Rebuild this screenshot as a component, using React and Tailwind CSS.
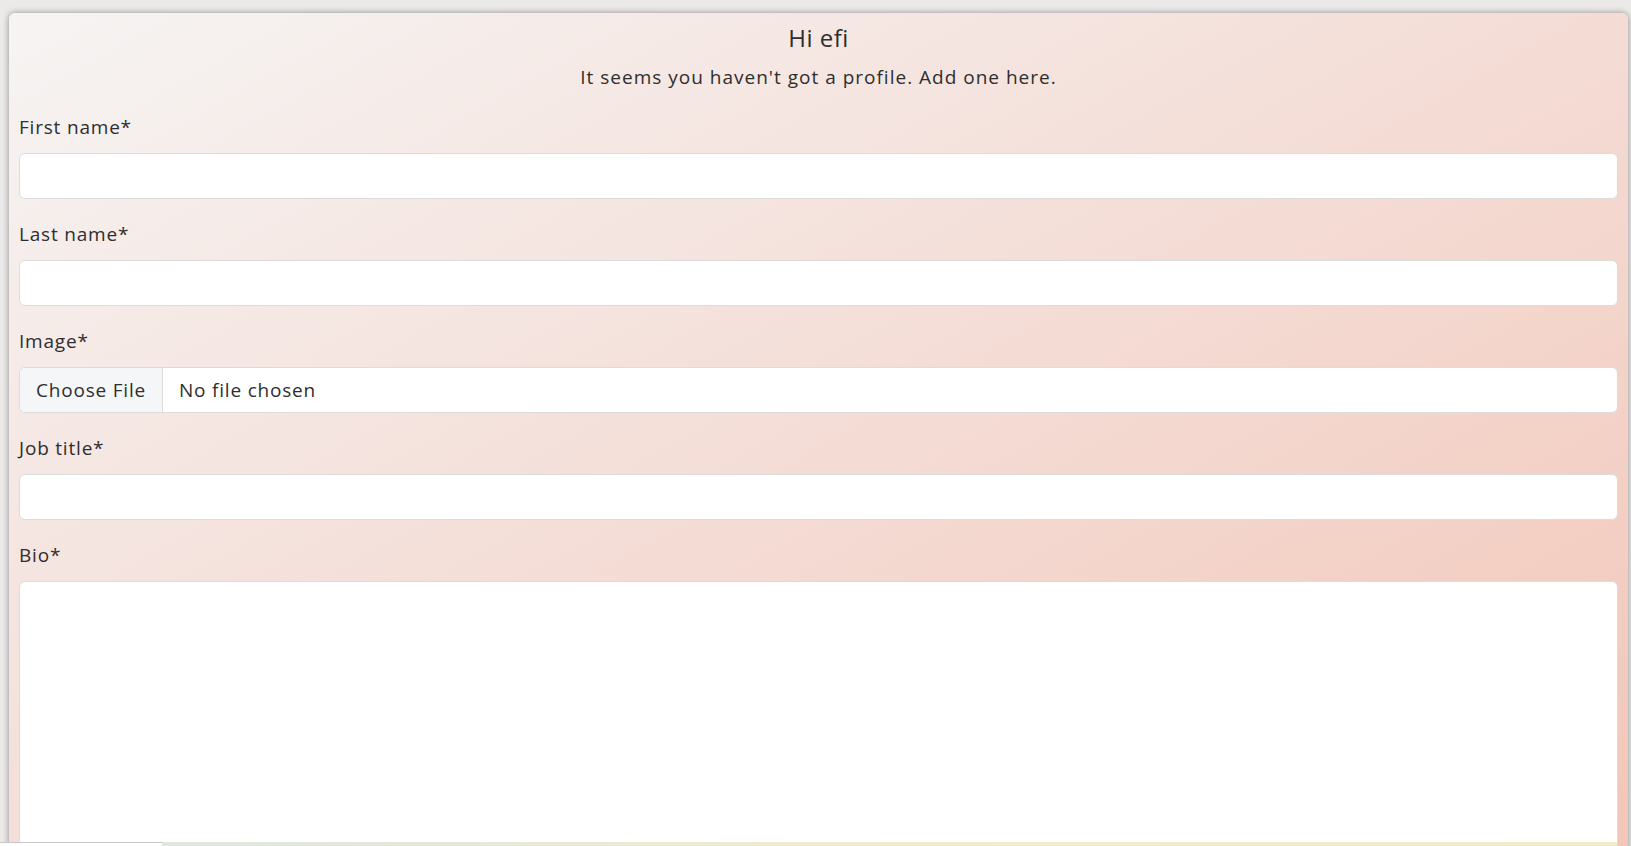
export default function App() {
    const fields = [
        { label: 'First name*', type: 'text' },
        { label: 'Last name*', type: 'text' },
        { label: 'Image*', type: 'file' },
        { label: 'Job title*', type: 'text' },
    ]

    return (
        <div className="relative min-h-screen bg-[#eceae9] pt-[13px] pl-[9px] pr-[3px] overflow-hidden"
             style={{ fontFamily: '"Open Sans", "Liberation Sans", sans-serif' }}>
            <div className="rounded-md bg-gradient-to-br from-[#f6f4f3] via-[#f4dcd5] to-[#f2c4b5] shadow-[0_0_6px_rgba(0,0,0,0.4)] px-[10px] pt-[10px] pb-6 text-[#2e2e2e] tracking-[0.8px]">
                <h1 className="text-center text-[24px] leading-[29px] font-medium tracking-[0.5px]">Hi efi</h1>
                <p className="text-center text-[19px] leading-[27px] mt-[12px] tracking-[1px]">
                    It seems you haven't got a profile. Add one here.
                </p>

                {/* Fields */}
                <div className="mt-[23px] flex flex-col gap-[22px]">
                    {fields.map(({ label, type }) => (
                        <div key={label}>
                            <label className="block text-[19px] leading-[27px]">{label}</label>
                            {type === 'file' ? (
                                <div className="mt-[12px] flex h-[46px] bg-white border border-[#dcdcdc] rounded-md overflow-hidden text-[19px]">
                                    <span className="flex items-center px-[16px] bg-[#f5f6f8] border-r border-[#dcdcdc]">Choose File</span>
                                    <span className="flex items-center px-[16px]">No file chosen</span>
                                </div>
                            ) : (
                                <input type="text"
                                       className="mt-[12px] block w-full h-[46px] bg-white border border-[#dcdcdc] rounded-md px-3 outline-none" />
                            )}
                        </div>
                    ))}
                    <div>
                        <label className="block text-[19px] leading-[27px]">Bio*</label>
                        <textarea className="mt-[12px] block w-full h-[320px] bg-white border border-[#dcdcdc] rounded-md px-3 outline-none resize-none" />
                    </div>
                </div>
            </div>

            {/* strip peeking at the bottom edge */}
            <div className="fixed bottom-0 left-0 w-[1617px] h-[4px] flex">
                <div className="w-[162px] h-full bg-white border-t border-[#c8c8c8]" />
                <div className="flex-1 h-full bg-gradient-to-r from-[#dfe6df] via-[#f2eccb] to-[#f1edc6]" />
            </div>
        </div>
    )
}
